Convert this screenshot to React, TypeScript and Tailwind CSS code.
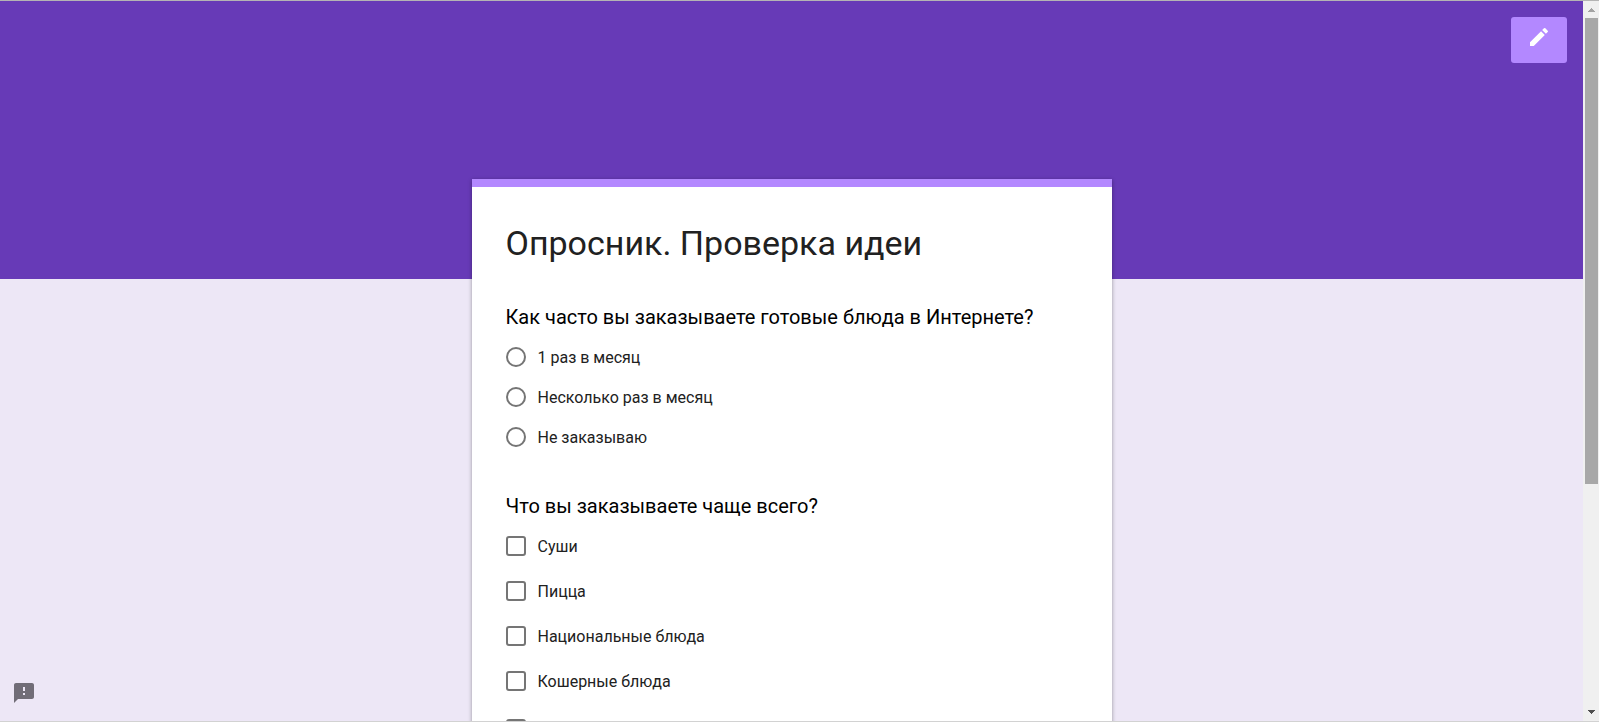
import { useState } from "react";
import { MdEdit, MdFeedback } from "react-icons/md";

const frequencyOptions = ["1 раз в месяц", "Несколько раз в месяц", "Не заказываю"];

const dishOptions = ["Суши", "Пицца", "Национальные блюда", "Кошерные блюда"];

function RadioOption({
    label,
    checked,
    onSelect,
}: {
    label: string;
    checked: boolean;
    onSelect: () => void;
}) {
    return (
        <label className="flex items-start gap-3 text-base leading-[22px]">
            <input
                type="radio"
                name="frequency"
                checked={checked}
                onChange={onSelect}
                className="size-5 shrink-0 appearance-none rounded-full border-2 border-[#757575] checked:border-[6px] checked:border-[#673ab7]"
            />
            {label}
        </label>
    );
}

function CheckboxOption({ label }: { label: string }) {
    return (
        <label className="flex items-start gap-3 text-base leading-[22px]">
            <input
                type="checkbox"
                name="dishes"
                className="size-5 shrink-0 appearance-none rounded-[3px] border-2 border-[#757575] checked:border-[#673ab7] checked:bg-[#673ab7]"
            />
            {label}
        </label>
    );
}

function Scrollbar() {
    return (
        <div className="flex w-4 shrink-0 flex-col items-center bg-[#f0f0f0]" aria-hidden="true">
            <svg width="16" height="17" shapeRendering="crispEdges" className="shrink-0">
                <path d="M8 7h1v1h1v1h1v1h1v1H5v-1h1V9h1V8h1z" fill="#a3a3a3" />
            </svg>
            <div className="flex w-full grow flex-col pr-px pl-0.5">
                <div className="h-[68%] bg-[#a8a8a8]"></div>
            </div>
            <svg width="16" height="17" shapeRendering="crispEdges" className="shrink-0">
                <path d="M5 6h7v1h-1v1h-1v1H9v1H8V9H7V8H6V7H5z" fill="#505050" />
            </svg>
        </div>
    );
}

export default function App() {
    const [frequency, setFrequency] = useState<string | null>(null);

    return (
        <div className="flex h-screen overflow-hidden border-t border-b border-t-[#b4b4b4] border-b-[#d2d2d2] bg-[#ede7f6] font-['Roboto',sans-serif] text-[#212121]">
            <div className="relative min-w-0 grow overflow-hidden">
                <header className="flex h-[278px] items-start justify-end bg-[#673ab7] p-4">
                    <button
                        type="button"
                        aria-label="Изменить форму"
                        className="flex h-[46px] w-14 justify-center rounded-[3px] bg-[#b388ff] pt-2 text-white"
                    >
                        <MdEdit size={24} />
                    </button>
                </header>

                <main className="mx-auto -mt-[100px] max-w-[640px] border-t-8 border-[#b388ff] bg-white px-[34px] pt-9 pb-16 shadow-[0_1px_4px_rgba(0,0,0,0.37)]">
                    <form>
                        <h1 className="text-[34px] leading-10">Опросник. Проверка идеи</h1>

                        <fieldset className="mt-[42px]">
                            <legend className="text-xl leading-6 text-black">
                                Как часто вы заказываете готовые блюда в Интернете?
                            </legend>
                            <div className="mt-[18px] flex flex-col items-start gap-[18px]">
                                {frequencyOptions.map((option) => (
                                    <RadioOption
                                        key={option}
                                        label={option}
                                        checked={frequency === option}
                                        onSelect={() => setFrequency(option)}
                                    />
                                ))}
                            </div>
                        </fieldset>

                        <fieldset className="mt-[45px]">
                            <legend className="text-xl leading-6 text-black">
                                Что вы заказываете чаще всего?
                            </legend>
                            <div className="mt-[18px] flex flex-col items-start gap-[23px]">
                                {dishOptions.map((option) => (
                                    <CheckboxOption key={option} label={option} />
                                ))}
                            </div>
                            <div className="mt-[26px] flex">
                                <input
                                    type="checkbox"
                                    name="dishes"
                                    aria-label="Другое"
                                    className="size-5 appearance-none rounded-[3px] border-2 border-[#757575] checked:border-[#673ab7] checked:bg-[#673ab7]"
                                />
                            </div>
                        </fieldset>
                    </form>
                </main>

                <button
                    type="button"
                    aria-label="Сообщить о проблеме"
                    className="absolute bottom-4 left-3 text-[#716d77]"
                >
                    <MdFeedback size={24} />
                </button>
            </div>
            <Scrollbar />
        </div>
    );
}
